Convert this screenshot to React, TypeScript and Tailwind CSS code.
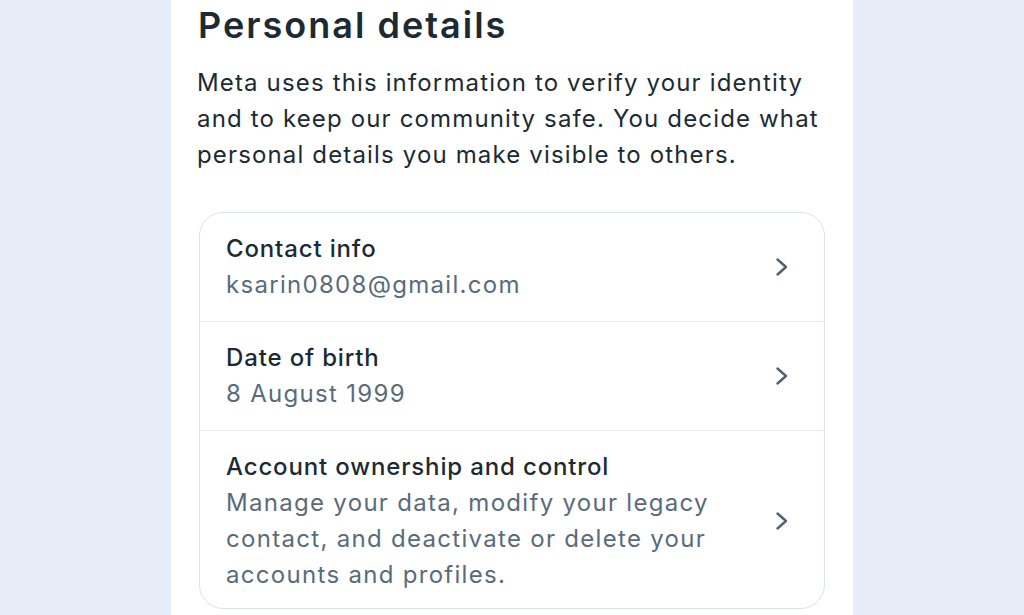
const ROWS = [
  { title: 'Contact info', detail: 'ksarin0808@gmail.com' },
  { title: 'Date of birth', detail: '8 August 1999' },
  {
    title: 'Account ownership and control',
    detail: 'Manage your data, modify your legacy contact, and deactivate or delete your accounts and profiles.',
  },
]

function Chevron() {
  return (
    <svg width="14" height="20" viewBox="0 0 14 20" fill="none" className="shrink-0">
      <path d="M2.5 2.5 L11 10 L2.5 17.5" stroke="#4f6272" strokeWidth="2.4" strokeLinecap="round" strokeLinejoin="round" />
    </svg>
  )
}

export default function App() {
  return (
    <div
      className="flex h-[615px] w-full justify-center overflow-hidden bg-[#e8ecf8]"
      style={{ fontFamily: 'Inter, "Noto Sans", sans-serif' }}
    >
      <div className="w-[682px] bg-white pl-[26px] pr-[28px] pt-[3px]">
        <h1 className="pl-[1px] text-[36px] font-semibold leading-[44px] tracking-[2px] text-[#1c2b33]">
          Personal details
        </h1>
        <p className="mt-[18px] text-[24px] leading-[36px] tracking-[1.15px] text-[#1c2b33]">
          Meta uses this information to verify your identity and to keep our community safe. You decide what personal
          details you make visible to others.
        </p>
        <div className="mt-[39px] ml-[2px] w-[626px] overflow-hidden rounded-[24px] border border-[#dde2e8]">
          {ROWS.map((row, i) => (
            <div
              key={row.title}
              className={
                'flex items-center gap-4 pl-[26px] pr-[35px] pt-[18px] ' +
                (i > 0 ? 'border-t border-[#e9edf0] ' : '') +
                (i === ROWS.length - 1 ? 'pb-[15px]' : 'pb-[18px]')
              }
            >
              <div className="min-w-0 flex-1">
                <div className="text-[24px] font-medium leading-[36px] tracking-[0.85px] text-[#1c2b33]">{row.title}</div>
                <div className="max-w-[490px] text-[24px] leading-[36px] tracking-[1.3px] text-[#5a6b7b]">
                  {row.detail}
                </div>
              </div>
              <Chevron />
            </div>
          ))}
        </div>
      </div>
    </div>
  )
}
